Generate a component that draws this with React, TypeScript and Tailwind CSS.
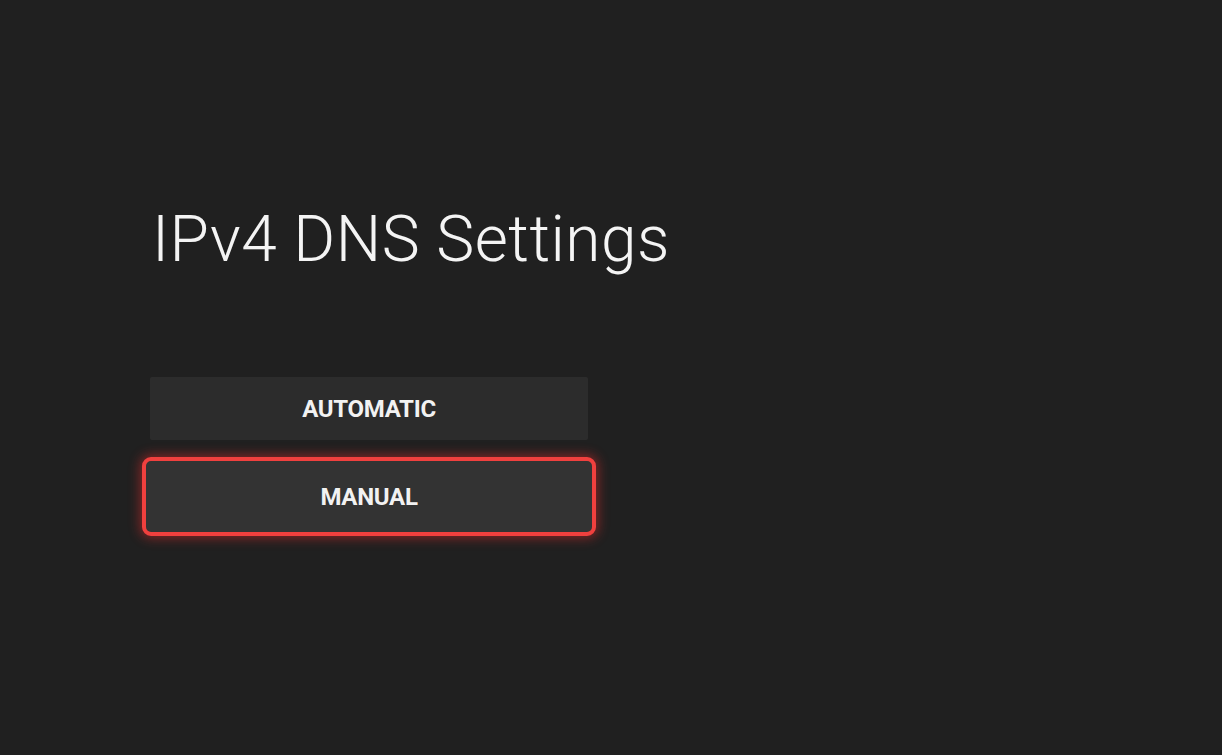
export default function App() {
  return (
    <div className="w-[1222px] h-[755px] bg-[#202020] overflow-hidden font-['Roboto','Liberation_Sans',sans-serif]">
      <div className="pl-[150px] pt-[208px]">
        <h1 className="pl-[2px] text-[64px] leading-none font-light text-[#f4f4f4] tracking-[0.5px]">
          IPv4 DNS Settings
        </h1>

        <div className="mt-[105px] w-[438px] flex flex-col gap-[17px]">
          <button className="h-[63px] w-full bg-[#2c2c2c] rounded-[2px] text-[24px] font-bold text-[#f2f2f2] tracking-[-0.3px]">
            AUTOMATIC
          </button>
          <button className="-mx-[8px] h-[79px] bg-[#333333] rounded-[9px] border-[4px] border-[#f0403e] shadow-[0_0_12px_2px_rgba(255,45,45,0.45)] text-[24px] font-bold text-[#f2f2f2] tracking-[-0.3px]">
            MANUAL
          </button>
        </div>
      </div>
    </div>
  );
}
